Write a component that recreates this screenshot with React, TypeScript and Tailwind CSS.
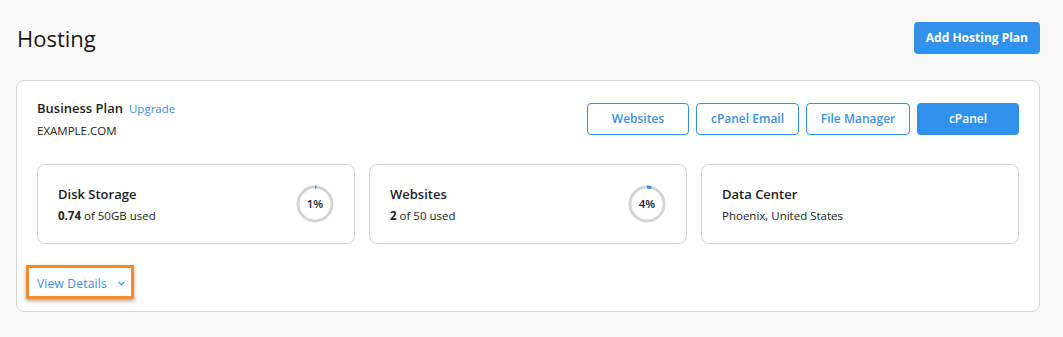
import { ChevronDown } from "lucide-react";

const stats = [
  { title: "Disk Storage", bold: "0.74", rest: " of 50GB used", pct: 1 },
  { title: "Websites", bold: "2", rest: " of 50 used", pct: 4 },
  { title: "Data Center", bold: "", rest: "Phoenix, United States", pct: null as number | null },
];

const actions = [
  { label: "Websites", w: "w-[102px]" },
  { label: "cPanel Email", w: "w-[103px]" },
  { label: "File Manager", w: "w-[104px]" },
];

function Ring({ pct }: { pct: number }) {
  const r = 17;
  const c = 2 * Math.PI * r;
  return (
    <div className="relative size-[38px] shrink-0">
      <svg width="38" height="38" viewBox="0 0 38 38" className="-rotate-90">
        <circle cx="19" cy="19" r={r} fill="none" stroke="#d4d4d4" strokeWidth="3" />
        <circle
          cx="19"
          cy="19"
          r={r}
          fill="none"
          stroke="#3092ec"
          strokeWidth="3"
          strokeDasharray={`${Math.max((c * pct) / 100, 1.5)} ${c}`}
        />
      </svg>
      <span className="absolute inset-0 grid place-items-center text-[11.5px] font-semibold text-[#1c1c1c]">
        {pct}%
      </span>
    </div>
  );
}

export default function App() {
  return (
    <div
      className="min-h-[337px] bg-[#f9f9f9] px-[16px] pt-[22px] text-[#222]"
      style={{ fontFamily: '"Open Sans", "Noto Sans", sans-serif' }}
    >
      <div className="flex items-center justify-between w-[1024px]">
        <h1 className="text-[22px] font-medium leading-[32px] pl-[1px] text-[#1a1a1a]">Hosting</h1>
        <button className="h-[32px] rounded-[4px] bg-[#3092ec] px-[12px] text-[12px] font-bold text-white">
          Add Hosting Plan
        </button>
      </div>

      <div className="mt-[26px] w-[1024px] rounded-[8px] border border-[#d6d6d6] bg-white px-[20px] pt-[18px] pb-[12px]">
        <div className="flex items-start justify-between">
          <div>
            <div className="flex items-baseline gap-[6px] leading-[18px]">
              <span className="text-[13px] font-semibold">Business Plan</span>
              <span className="text-[11.5px] text-[#3a8fe6]">Upgrade</span>
            </div>
            <div className="mt-[5px] text-[11.5px] leading-[16px]">EXAMPLE.COM</div>
          </div>
          <div className="mt-[4px] flex gap-[7px]">
            {actions.map((a) => (
              <button
                key={a.label}
                className={`${a.w} h-[32px] rounded-[4px] border border-[#3092ec] bg-white text-[12px] font-semibold text-[#3a8fe6]`}
              >
                {a.label}
              </button>
            ))}
            <button className="w-[102px] h-[32px] rounded-[4px] bg-[#3092ec] text-[12px] font-semibold text-white">
              cPanel
            </button>
          </div>
        </div>

        <div className="mt-[25px] grid grid-cols-3 gap-[14px]">
          {stats.map((s) => (
            <div
              key={s.title}
              className="flex h-[80px] items-center justify-between rounded-[8px] border border-[#d4d4d4] pl-[20px] pr-[20px]"
            >
              <div>
                <div className="text-[13px] font-semibold leading-[20px] text-[#1e1e1e]">{s.title}</div>
                <div className="mt-[4px] text-[11.5px] leading-[16px]">
                  {s.bold && <span className="font-bold">{s.bold}</span>}
                  {s.rest}
                </div>
              </div>
              {s.pct !== null && <Ring pct={s.pct} />}
            </div>
          ))}
        </div>

        <div className="mt-[21px] flex">
          <div className="-ml-[11px] flex h-[34px] w-[108px] items-center gap-[9px] border-[3px] border-[#f58a2f] pl-[8px] pt-[3px] shadow-[0_2px_4px_rgba(0,0,0,0.35)]">
            <span className="text-[12px] text-[#3a8fe6] tracking-[0.2px]">View Details</span>
            <ChevronDown className="size-[11px] text-[#3a8fe6]" strokeWidth={2.5} />
          </div>
        </div>
      </div>
    </div>
  );
}
